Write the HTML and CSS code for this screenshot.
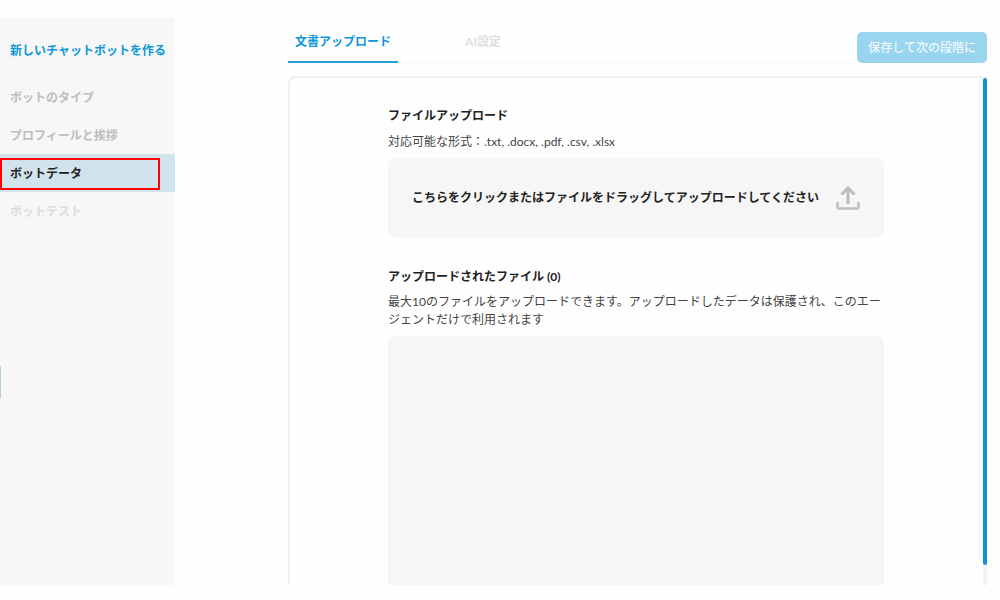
FILE: index.html
```html
<!DOCTYPE html>
<html lang="ja">
<head>
<meta charset="utf-8">
<meta name="viewport" content="width=device-width, initial-scale=1">
<title>新しいチャットボットを作る</title>
<link rel="stylesheet" href="styles.css">
</head>
<body>
<div class="app">
  <aside class="sidebar">
    <h1 class="sidebar-title">新しいチャットボットを作る</h1>
    <nav class="steps">
      <a class="step" href="#type">ボットのタイプ</a>
      <a class="step" href="#profile">プロフィールと挨拶</a>
      <a class="step step-active" href="#data" aria-current="step">ボットデータ</a>
      <a class="step step-disabled" href="#test">ボットテスト</a>
    </nav>
    <span class="edge-marker"></span>
  </aside>
  <main class="main">
    <header class="toolbar">
      <div class="tabs" role="tablist">
        <button class="tab tab-active" type="button" role="tab" aria-selected="true">文書アップロード</button>
        <button class="tab" type="button" role="tab" aria-selected="false">AI設定</button>
      </div>
      <button class="save" type="button">保存して次の段階に</button>
    </header>
    <section class="panel">
      <div class="content">
        <h2 class="heading">ファイルアップロード</h2>
        <p class="note">対応可能な形式：.txt, .docx, .pdf, .csv, .xlsx</p>
        <label class="dropzone" for="file">
          <span>こちらをクリックまたはファイルをドラッグしてアップロードしてください</span>
          <svg class="upload-icon" viewBox="0 0 24 24" width="24" height="24" aria-hidden="true">
            <path d="M12 18V2.500M5.500 8.500L12 2l6.500 6.500" stroke-width="3"/>
            <path d="M1.500 16v5q0 1.500 1.500 1.500h18q1.500 0 1.500-1.500v-5" stroke-width="2.600"/>
          </svg>
          <input class="file-input" id="file" type="file" multiple>
        </label>
        <h2 class="heading heading-files">アップロードされたファイル (0)</h2>
        <p class="note">最大10のファイルをアップロードできます。アップロードしたデータは保護され、このエージェントだけで利用されます</p>
        <div class="file-list"></div>
      </div>
      <div class="scrollbar"><div class="scroll-thumb"></div></div>
    </section>
  </main>
</div>
</body>
</html>
```
FILE: styles.css
```css
* {
  box-sizing: border-box;
}

body {
  margin: 0;
  background: #fefefe;
  color: #222;
  font: 12px/18px Lato, "Noto Sans CJK JP", sans-serif;
}

h1, h2, p {
  margin: 0;
  font-size: 12px;
}

button {
  font: inherit;
  border: 0;
  cursor: pointer;
}

.app {
  display: grid;
  grid-template-columns: 175px minmax(0, 1fr);
  height: 100vh;
  padding: 18px 0 15px;
}

.sidebar {
  position: relative;
  background: #f7f7f7;
}

.sidebar-title {
  padding: 24px 10px 18px;
  color: #0f98d8;
  white-space: nowrap;
}

.steps {
  display: flex;
  flex-direction: column;
}

.step {
  position: relative;
  padding: 11px 10px 9px;
  color: #bdbdbd;
  font-weight: bold;
  text-decoration: none;
}

.step-active {
  background: #d1e3ed;
  color: #222;
}

.step-active::after {
  content: "";
  position: absolute;
  inset: 4px 15px 2px 0;
  border: 2px solid #ff0000;
}

.step-disabled {
  color: #dcdcdc;
}

.edge-marker {
  position: absolute;
  left: 0;
  top: 348px;
  width: 1px;
  height: 32px;
  background: #b5d9b8;
}

.main {
  display: flex;
  flex-direction: column;
  gap: 13px;
  min-height: 0;
  padding: 14px 13px 0 113px;
}

.toolbar {
  display: flex;
  align-items: flex-start;
}

.tabs {
  display: flex;
  flex: 1;
  gap: 30px;
  height: 31px;
  border-bottom: 1px solid #f6f6f6;
}

.tab {
  width: 110px;
  height: 31px;
  padding: 0 0 9px;
  border-bottom: 2px solid transparent;
  background: none;
  color: #dfdfdf;
  font-weight: bold;
}

.tab-active {
  border-bottom-color: #2a9fdb;
  color: #0f98d8;
}

.save {
  height: 31px;
  padding: 0 11px;
  border-radius: 5px;
  background: #9ad5ef;
  color: #fff;
}

.panel {
  display: flex;
  flex: 1;
  justify-content: space-between;
  min-height: 0;
  overflow: hidden;
  border: solid #f1f1f1;
  border-width: 2px 0 0 2px;
  border-radius: 8px 0 0 0;
}

.content {
  display: flex;
  flex-direction: column;
  flex: 0 1 496px;
  margin-left: 98px;
  padding-top: 29px;
}

.heading {
  margin-bottom: 8px;
}

.heading-files {
  margin: 30px 0 7px;
}

.note {
  margin-bottom: 7px;
  color: #444;
}

.dropzone {
  position: relative;
  display: flex;
  align-items: center;
  justify-content: space-between;
  height: 80px;
  padding: 0 24px;
  border-radius: 8px;
  background: #f6f6f6;
  font-weight: bold;
  cursor: pointer;
}

.upload-icon {
  flex: none;
  fill: none;
  stroke: #bdbdbd;
}

.file-input {
  position: absolute;
  inset: 0;
  opacity: 0;
}

.file-list {
  flex: 1;
  border-radius: 8px 8px 0 0;
  background: #f6f6f6;
}

.scrollbar {
  width: 4px;
  background: #f2f2f2;
}

.scroll-thumb {
  height: 96%;
  border-radius: 2px;
  background: #0b93d8;
}
```
